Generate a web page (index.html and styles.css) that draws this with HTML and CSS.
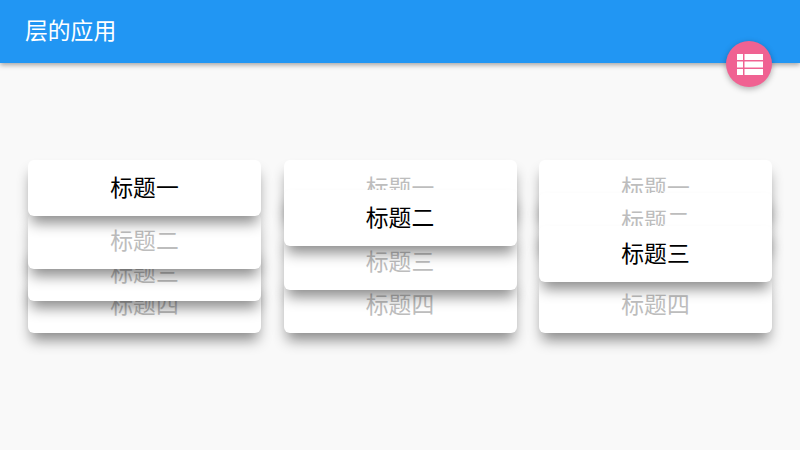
FILE: index.html
```html
<!DOCTYPE html>
<html lang="zh-CN">
<head>
    <meta charset="UTF-8">
    <meta name="viewport" content="width=device-width, initial-scale=1.0">
    <title>层的应用</title>
    <link rel="stylesheet" href="styles.css">
</head>
<body>

<header class="app-bar">
    <h1>层的应用</h1>
    <button class="fab" aria-label="列表">
        <svg class="fab-icon" width="26" height="21" viewBox="0 0 26 21">
            <path fill="#ffffff" d="M0 0h6v6H0zM7.500 0H26v6H7.500zM0 7.500h6v6H0zM7.500 7.500H26v6H7.500zM0 15h6v6H0zM7.500 15H26v6H7.500z"/>
        </svg>
    </button>
</header>

<main class="stacks">
    <section class="stack stack-one">
        <div class="card active">标题一</div>
        <div class="card">标题二</div>
        <div class="card">标题三</div>
        <div class="card">标题四</div>
    </section>
    <section class="stack stack-two">
        <div class="card">标题一</div>
        <div class="card active">标题二</div>
        <div class="card">标题三</div>
        <div class="card">标题四</div>
    </section>
    <section class="stack stack-three">
        <div class="card">标题一</div>
        <div class="card">标题二</div>
        <div class="card active">标题三</div>
        <div class="card">标题四</div>
    </section>
</main>

</body>
</html>
```

FILE: styles.css
```css
body {
    font-family: "Noto Sans CJK SC", "Noto Sans", sans-serif;
    background-color: #f9f9f9;
    margin: 0;
    height: 450px;
    overflow: hidden;
}
.app-bar {
    position: relative;
    z-index: 10;
    box-sizing: border-box;
    height: 63px;
    padding: 0 0 5px 25px;
    display: flex;
    align-items: center;
    background-color: #2196f3;
    box-shadow: 0 2px 5px rgba(0, 0, 0, 0.35);
}
.app-bar h1 {
    margin: 0;
    color: #ffffff;
    font-size: 22.8px;
    font-weight: 400;
}
.fab {
    position: absolute;
    top: 41px;
    right: 28px;
    width: 46px;
    height: 46px;
    padding: 0;
    border: none;
    border-radius: 50%;
    display: flex;
    align-items: center;
    justify-content: center;
    background-color: #f06292;
    box-shadow: 0 2px 6px rgba(0, 0, 0, 0.3);
}
.fab-icon {
    margin-left: 1px;
}
.stacks {
    display: flex;
    gap: 22.5px;
    padding: 97px 28px 0;
}
.stack {
    flex: 1;
    display: flex;
    flex-direction: column;
}
.card {
    position: relative;
    height: 56px;
    line-height: 53px;
    flex-shrink: 0;
    text-align: center;
    font-size: 22.8px;
    color: #bdbdbd;
    background-color: #ffffff;
    border-radius: 6px;
    box-shadow: 0 10px 14px -3px rgba(0, 0, 0, 0.45);
}
.card.active {
    color: #000000;
}

/* overlap and stacking for each column */
.stack-one .card:nth-child(1) { z-index: 4; }
.stack-one .card:nth-child(2) { z-index: 3; margin-top: -3px; }
.stack-one .card:nth-child(3) { z-index: 2; margin-top: -24px; }
.stack-one .card:nth-child(4) { z-index: 1; margin-top: -24px; }

.stack-two .card:nth-child(1) { z-index: 2; }
.stack-two .card:nth-child(2) { z-index: 4; margin-top: -26px; }
.stack-two .card:nth-child(3) { z-index: 3; margin-top: -12px; }
.stack-two .card:nth-child(4) { z-index: 1; margin-top: -13px; }

.stack-three .card:nth-child(1) { z-index: 1; }
.stack-three .card:nth-child(2) { z-index: 2; margin-top: -23px; }
.stack-three .card:nth-child(3) { z-index: 4; margin-top: -23px; }
.stack-three .card:nth-child(4) { z-index: 3; margin-top: -5px; }
```
